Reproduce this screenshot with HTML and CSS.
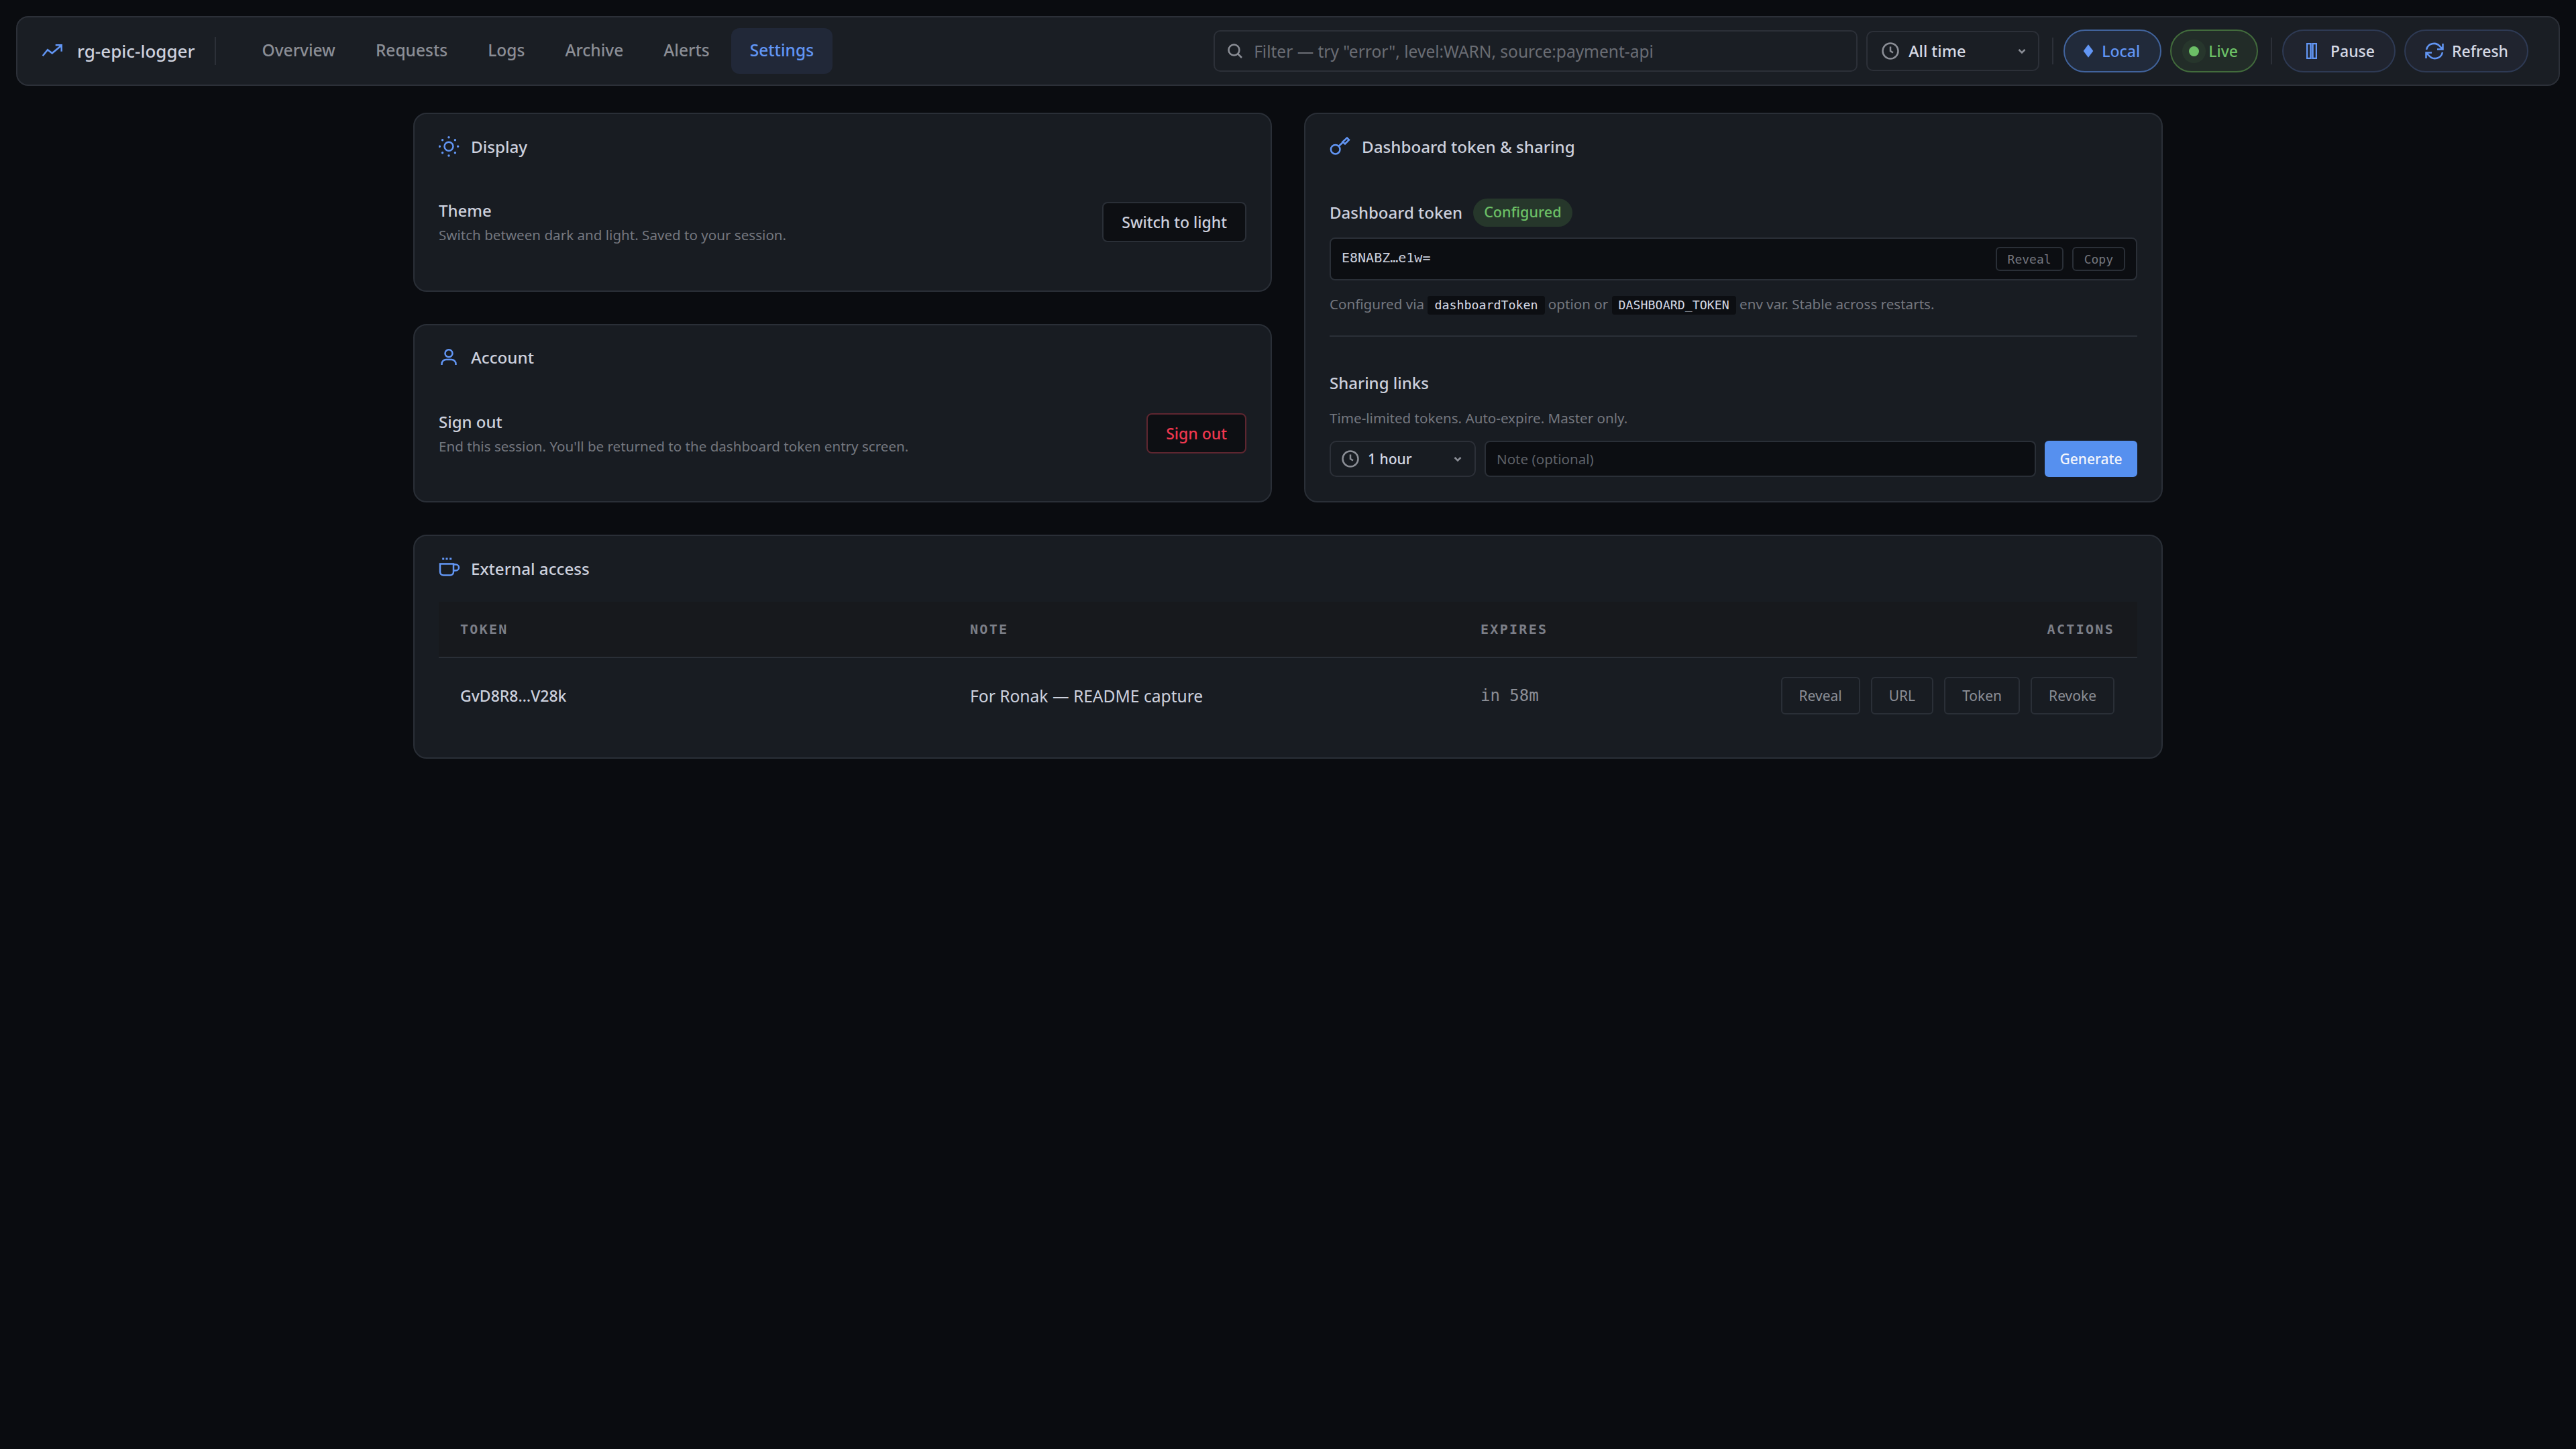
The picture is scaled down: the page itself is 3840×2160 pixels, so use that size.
FILE: index.html
```html
<!DOCTYPE html>
<html lang="en">

<head>
    <meta charset="UTF-8" />
    <title>rg-epic-logger - Settings</title>
    <link rel="stylesheet" href="styles.css">
</head>

<body>
    <!-- Top bar -->
    <header class="topbar">
        <div class="brand">
            <svg class="brand-icon" width="32" height="32" viewBox="0 0 32 32"><path d="M1.7 23.3L9 14.2l6.7 5.1L29 8.3M20.7 7.3h9v9.4"/></svg>
            <span>rg-epic-logger</span>
        </div>
        <nav class="nav">
            <a>Overview</a>
            <a>Requests</a>
            <a>Logs</a>
            <a>Archive</a>
            <a>Alerts</a>
            <a class="active">Settings</a>
        </nav>
        <div class="topbar-right">
            <div class="filter">
                <svg class="muted-icon" width="24" height="24" viewBox="0 0 24 24"><circle cx="10.5" cy="10.5" r="8"/><path d="M16.5 16.5L22 22"/></svg>
                <span>Filter — try "error", level:WARN, source:payment-api</span>
            </div>
            <div class="select range">
                <svg class="muted-icon" width="26" height="26" viewBox="0 0 26 26"><circle cx="13" cy="13" r="11.5"/><path d="M13 6.5V13l4 2.5"/></svg>
                <span>All time</span>
                <svg class="chevron" width="14" height="14" viewBox="0 0 14 14"><path d="M2.5 5l4.5 4.5L11.5 5"/></svg>
            </div>
            <div class="sep"></div>
            <div class="pill pill-local"><i class="diamond"></i>Local</div>
            <div class="pill pill-live"><i class="dot"></i>Live</div>
            <div class="sep"></div>
            <div class="pill pill-action pause">
                <svg class="accent-icon" width="16" height="24" viewBox="0 0 16 24"><rect x="1" y="1" width="5.5" height="22"/><rect x="9.5" y="1" width="5.5" height="22"/></svg>
                Pause
            </div>
            <div class="pill pill-action refresh">
                <svg class="accent-icon" width="30" height="26" viewBox="0 0 30 26"><path d="M3 11A11.5 11.5 0 0 1 23 6l4 4M27.500 2v8.500H19M27 15A11.500 11.500 0 0 1 7 20l-4-4M2.500 24v-8.500H11"/></svg>
                Refresh
            </div>
        </div>
    </header>

    <main class="content">
        <div class="left-col">
            <section class="card">
                <h2 class="card-title">
                    <svg class="accent-icon" width="32" height="32" viewBox="0 0 32 32">
                        <circle cx="15" cy="16.300" r="6.500"/>
                        <path class="dots" d="M15 2.700v.01M15 29.900v.01M1.400 16.300h.01M28.600 16.300h.01M5.600 6.800h.01M24.400 6.800h.01M5.600 25.800h.01M24.400 25.800h.01"/>
                    </svg>
                    Display
                </h2>
                <div class="setting-row">
                    <div>
                        <div class="setting-name">Theme</div>
                        <div class="setting-desc">Switch between dark and light. Saved to your session.</div>
                    </div>
                    <button class="btn">Switch to light</button>
                </div>
            </section>

            <section class="card">
                <h2 class="card-title">
                    <svg class="accent-icon" width="32" height="32" viewBox="0 0 32 32">
                        <circle cx="15" cy="9.700" r="5.500"/>
                        <path d="M4.500 27v-1.500a6.500 6.500 0 0 1 6.500-6.500h8a6.500 6.500 0 0 1 6.500 6.500V27"/>
                    </svg>
                    Account
                </h2>
                <div class="setting-row">
                    <div>
                        <div class="setting-name">Sign out</div>
                        <div class="setting-desc">End this session. You'll be returned to the dashboard token entry screen.</div>
                    </div>
                    <button class="btn btn-danger">Sign out</button>
                </div>
            </section>
        </div>

        <section class="card token-card">
            <h2 class="card-title">
                <svg class="accent-icon" width="32" height="32" viewBox="0 0 32 32">
                    <circle cx="8.700" cy="20.700" r="6.800"/>
                    <path d="M13.500 16L21 9M19.500 9.500L26 3.500l3 3-6 6z"/>
                </svg>
                Dashboard token &amp; sharing
            </h2>

            <div class="token-head">
                <span class="setting-name">Dashboard token</span>
                <span class="badge">Configured</span>
            </div>
            <div class="token-field">
                <span class="token-value">E8NABZ…e1w=</span>
                <button class="mini-btn">Reveal</button>
                <button class="mini-btn">Copy</button>
            </div>
            <p class="token-help">Configured via <code>dashboardToken</code> option or <code>DASHBOARD_TOKEN</code> env var. Stable across restarts.</p>

            <hr class="divider">

            <div class="setting-name">Sharing links</div>
            <p class="sharing-help">Time-limited tokens. Auto-expire. Master only.</p>
            <div class="sharing-form">
                <div class="select duration">
                    <svg class="muted-icon" width="26" height="26" viewBox="0 0 26 26"><circle cx="13" cy="13" r="11.500"/><path d="M13 6.500V13l4 2.500"/></svg>
                    <span>1 hour</span>
                    <svg class="chevron" width="14" height="14" viewBox="0 0 14 14"><path d="M2.500 5l4.500 4.500L11.500 5"/></svg>
                </div>
                <div class="note-input">Note (optional)</div>
                <button class="btn-primary">Generate</button>
            </div>
        </section>

        <section class="card access-card">
            <h2 class="card-title">
                <svg class="accent-icon" width="32" height="32" viewBox="0 0 32 32">
                    <path d="M2 9.500h20v12a5 5 0 0 1-5 5H7a5 5 0 0 1-5-5zM22 10.500h3.500a4.500 4.500 0 0 1 0 9H22"/>
                    <path class="dots cup-dots" d="M6.700 2v.01M12 2v.01M17.700 2v.01"/>
                </svg>
                External access
            </h2>
            <table class="access-table">
                <thead>
                    <tr>
                        <th class="col-token">Token</th>
                        <th class="col-note">Note</th>
                        <th>Expires</th>
                        <th class="col-actions">Actions</th>
                    </tr>
                </thead>
                <tbody>
                    <tr>
                        <td class="cell-token">GvD8R8…V28k</td>
                        <td class="cell-note">For Ronak — README capture</td>
                        <td class="cell-expires">in 58m</td>
                        <td class="col-actions">
                            <div class="row-actions">
                                <button class="btn-ghost">Reveal</button>
                                <button class="btn-ghost">URL</button>
                                <button class="btn-ghost">Token</button>
                                <button class="btn-ghost">Revoke</button>
                            </div>
                        </td>
                    </tr>
                </tbody>
            </table>
        </section>
    </main>
</body>

</html>
```

FILE: styles.css
```css
body {
    font-family: "Noto Sans", sans-serif;
    margin: 0;
    padding: 24px;
    height: 2160px;
    box-sizing: border-box;
    background-color: #0a0c10;
    color: #cdd1de;
    font-size: 24px;
}

svg {
    fill: none;
    stroke-width: 2.5;
    flex: none;
}

button {
    font-family: inherit;
}

code {
    font-family: "DejaVu Sans Mono", monospace;
}

.accent-icon,
.brand-icon {
    stroke: #6296f5;
}

.muted-icon,
.chevron {
    stroke: #8b8e96;
}

.dots {
    stroke-width: 3.5;
    stroke-linecap: round;
}

.cup-dots {
    stroke-linecap: square;
    stroke-width: 3;
}

/* Top bar */
.topbar {
    display: flex;
    align-items: center;
    height: 104px;
    box-sizing: border-box;
    padding: 0 45px 0 36px;
    background-color: #1a1e24;
    border: 2px solid #2c3038;
    border-radius: 18px;
}

.brand {
    display: flex;
    align-items: center;
    gap: 21px;
    padding-right: 30px;
    font-size: 26px;
    font-weight: 500;
    border-right: 2px solid #2c3038;
    height: 42px;
}

.nav {
    display: flex;
    gap: 4px;
    margin-left: 40px;
}

.nav a {
    padding: 0 28px;
    height: 68px;
    line-height: 66px;
    border-radius: 12px;
    color: #8b8e96;
    font-size: 24.5px;
    font-weight: 500;
}

.nav a.active {
    color: #6296f5;
    background-color: #212838;
}

.topbar-right {
    display: flex;
    align-items: center;
    gap: 13px;
    margin-left: auto;
}

.filter {
    display: flex;
    align-items: center;
    gap: 16px;
    width: 960px;
    height: 62px;
    box-sizing: border-box;
    padding: 0 18px;
    border: 2px solid #2c3038;
    border-radius: 10px;
    color: #6a6d74;
    font-size: 24.5px;
}

.select {
    display: flex;
    align-items: center;
    box-sizing: border-box;
    border: 2px solid #2c3038;
    border-radius: 10px;
    color: #d6dae6;
    font-weight: 500;
}

.select .chevron {
    margin-left: auto;
}

.range {
    width: 258px;
    height: 60px;
    gap: 14px;
    padding: 0 17px 0 21px;
    font-size: 23.5px;
}

.sep {
    width: 2px;
    height: 40px;
    margin: 0 2px 0 6px;
    background-color: #2c3038;
}

.pill {
    display: flex;
    align-items: center;
    height: 64px;
    box-sizing: border-box;
    border-radius: 32px;
    font-size: 23px;
    font-weight: 500;
    border: 2px solid;
}

.pill-local {
    gap: 11px;
    padding: 0 30px 0 26px;
    color: #6296f5;
    border-color: #41639c;
    background-color: #212a3a;
}

.diamond {
    width: 12px;
    height: 12px;
    margin: 0 3px;
    background-color: #6296f5;
    transform: rotate(45deg) skew(8deg, 8deg);
}

.pill-live {
    gap: 14px;
    padding: 0 28px 0 26px;
    color: #6cc066;
    border-color: #426b3c;
    background-color: #222c28;
}

.dot {
    width: 15px;
    height: 15px;
    border-radius: 50%;
    background-color: #6cc066;
    box-shadow: 0 0 0 10px rgba(108, 192, 102, 0.07);
}

.pill-action {
    color: #d6dae6;
    border-color: #2e3a54;
    background-color: #20242f;
}

.pause {
    gap: 20px;
    padding: 0 29px 0 34px;
}

.refresh {
    gap: 11px;
    padding: 0 28px;
}

/* Cards */
.content {
    display: grid;
    grid-template-columns: 1280px 1280px;
    gap: 48px;
    width: 2608px;
    margin: 40px auto 0;
}

.left-col {
    display: flex;
    flex-direction: column;
    gap: 48px;
}

.card {
    box-sizing: border-box;
    padding: 32px 36px 36px;
    background-color: #181c22;
    border: 2px solid #2a2f37;
    border-radius: 20px;
}

.left-col .card {
    flex: 1;
}

.card-title {
    display: flex;
    align-items: center;
    gap: 16px;
    margin: 0;
    height: 32px;
    font-size: 24.2px;
    font-weight: 500;
}

.setting-row {
    display: flex;
    align-items: center;
    justify-content: space-between;
    margin-top: 62px;
}

.setting-name {
    font-size: 24px;
    font-weight: 500;
    line-height: 36px;
}

.setting-desc {
    margin-top: 2px;
    font-size: 20.6px;
    line-height: 32px;
    color: #74777f;
}

.btn {
    height: 60px;
    padding: 0 27px;
    background-color: #0d0f13;
    border: 2px solid #2a2f37;
    border-radius: 8px;
    color: #cdd1de;
    font-size: 23px;
    font-weight: 500;
}

.btn-danger {
    color: #f0384f;
    border-color: #5e2630;
}

/* Token card */
.token-head {
    display: flex;
    align-items: center;
    gap: 16px;
    margin-top: 62px;
    height: 42px;
}

.badge {
    height: 42px;
    line-height: 40px;
    padding: 0 16px;
    border-radius: 21px;
    background-color: #26372b;
    color: #6cc066;
    font-size: 21.6px;
    font-weight: 500;
}

.token-field {
    display: flex;
    align-items: center;
    gap: 13px;
    height: 64px;
    box-sizing: border-box;
    margin-top: 16px;
    padding: 0 16px;
    background-color: #0c0e12;
    border: 2px solid #2a2f37;
    border-radius: 8px;
}

.token-value {
    flex: 1;
    margin-bottom: 4px;
    font-family: "DejaVu Sans Mono", monospace;
    font-size: 20px;
    color: #cdd1de;
}

.mini-btn {
    height: 36px;
    padding: 0 16px;
    background: none;
    border: 2px solid #2a2f37;
    border-radius: 6px;
    color: #74777f;
    font-family: "DejaVu Sans Mono", monospace;
    font-size: 18px;
}

.token-help {
    margin: 20px 0 0;
    height: 30px;
    line-height: 30px;
    font-size: 20.6px;
    color: #74777f;
}

.token-help code {
    display: inline-block;
    height: 28px;
    line-height: 27px;
    padding: 0 10px;
    border-radius: 4px;
    background-color: #0c0e12;
    color: #d6dae6;
    font-size: 18.3px;
}

.divider {
    margin: 32px 0 0;
    border: 0;
    border-top: 2px solid #2a2f37;
}

.divider + .setting-name {
    margin-top: 51px;
}

.sharing-help {
    margin: 19px 0 0;
    font-size: 20.6px;
    line-height: 30px;
    color: #74777f;
}

.sharing-form {
    display: flex;
    gap: 13px;
    margin-top: 19px;
    height: 54px;
}

.duration {
    width: 218px;
    gap: 13px;
    padding: 0 18px 0 16px;
    background: none;
    font-size: 21px;
}

.note-input {
    flex: 1;
    box-sizing: border-box;
    padding: 0 16px;
    line-height: 50px;
    background-color: #0c0e12;
    border: 2px solid #2a2f37;
    border-radius: 8px;
    color: #5e6168;
    font-size: 20.6px;
}

.btn-primary {
    width: 138px;
    background-color: #5690ef;
    border: 0;
    border-radius: 6px;
    color: #f2f5fb;
    font-size: 21px;
    font-weight: 500;
}

/* External access */
.access-card {
    grid-column: 1 / 3;
}

.access-table {
    width: 100%;
    margin-top: 34px;
    border-collapse: collapse;
    table-layout: fixed;
}

.access-table th {
    height: 82px;
    padding: 0;
    background-color: #17191d;
    border-bottom: 2px solid #2a2f37;
    color: #7c7f88;
    font-family: "DejaVu Sans Mono", monospace;
    font-size: 20px;
    font-weight: 600;
    letter-spacing: 2.3px;
    text-align: left;
    text-transform: uppercase;
}

.access-table th:first-child,
.access-table td:first-child {
    padding-left: 32px;
}

.col-token {
    width: 760px;
}

.col-note {
    width: 761px;
}

.access-table .col-actions {
    padding-right: 34px;
    text-align: right;
}

.access-table td {
    padding: 28px 0;
}

.cell-token {
    font-size: 23px;
    font-weight: 500;
    color: #cdd1de;
}

.cell-note {
    font-size: 24.6px;
    color: #cdd1de;
}

.cell-expires {
    font-family: "DejaVu Sans Mono", monospace;
    font-size: 24px;
    color: #8b8e96;
}

.row-actions {
    display: flex;
    justify-content: flex-end;
    gap: 16px;
}

.btn-ghost {
    height: 56px;
    padding: 0 25px;
    background: none;
    border: 2px solid #2a2f37;
    border-radius: 6px;
    color: #8b8e96;
    font-size: 21px;
}
```
